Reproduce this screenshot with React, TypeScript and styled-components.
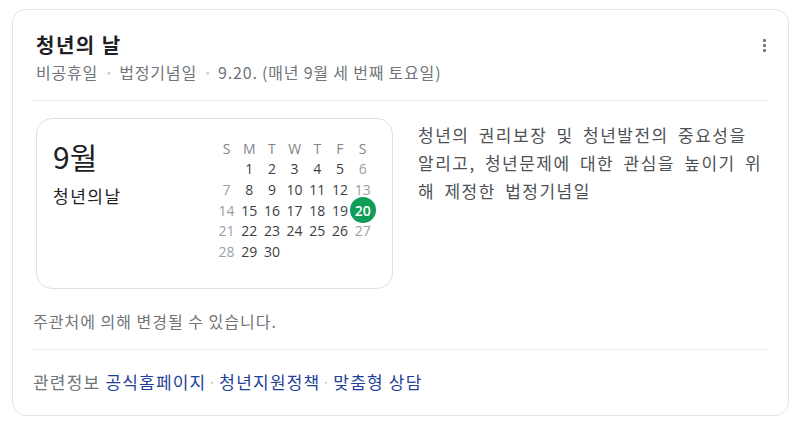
import React from "react";
import styled, { createGlobalStyle } from "styled-components";

const GlobalStyle = createGlobalStyle`
  body {
    margin: 0;
    background: #ffffff;
    font-family: "Noto Sans CJK KR", "Noto Sans", Roboto, sans-serif;
  }
`;

const Card = styled.div`
  box-sizing: border-box;
  width: 777px;
  height: 407px;
  margin: 9px 0 0 12px;
  padding: 22px 20px 0 20px;
  border: 1px solid #e6e6e6;
  border-radius: 14px;
  background: #ffffff;
`;

const Header = styled.div`
  display: flex;
  justify-content: space-between;
  align-items: flex-start;
  padding-left: 3px;
`;

const Title = styled.div`
  font-size: 20px;
  line-height: 26px;
  font-weight: 700;
  letter-spacing: 1.5px;
  color: #202124;
`;

const Subtitle = styled.div`
  margin-top: 3px;
  display: flex;
  align-items: center;
  font-size: 16px;
  line-height: 22px;
  letter-spacing: 0.8px;
  color: #70757a;
`;

const Dot = styled.span`
  margin: 0 8px 0 9px;
  color: #c4c7ca;
  font-size: 10px;
`;

const MoreButton = styled.div`
  display: flex;
  flex-direction: column;
  gap: 2px;
  margin: 7px 2px 0 0;
  & > span {
    width: 3px;
    height: 3px;
    background: #70757a;
    border-radius: 1px;
  }
`;

const Divider = styled.div<{ $top: number; $bottom: number }>`
  height: 1px;
  background: #ebebeb;
  margin: ${(p) => `${p.$top}px 0 ${p.$bottom}px`};
`;

const Body = styled.div`
  display: flex;
  gap: 25px;
  padding-left: 3px;
`;

const CalendarCard = styled.div`
  box-sizing: border-box;
  width: 357px;
  height: 171px;
  border: 1px solid #dfe1e5;
  border-radius: 16px;
  display: flex;
  justify-content: space-between;
  padding: 19px 18px 0 16px;
`;

const MonthInfo = styled.div`
  display: flex;
  flex-direction: column;
`;

const Month = styled.div`
  font-size: 30px;
  line-height: 36px;
  color: #202124;
`;

const EventName = styled.div`
  margin-top: 10px;
  font-size: 17px;
  line-height: 24px;
  letter-spacing: 1.5px;
  color: #202124;
`;

const Grid = styled.div`
  display: grid;
  grid-template-columns: repeat(7, 22.7px);
  grid-auto-rows: 20.6px;
  font-family: "Open Sans", "Noto Sans", sans-serif;
  font-size: 14px;
`;

type Tone = "head" | "weekend" | "day" | "today";

const toneColor: Record<Tone, string> = {
  head: "#80868b",
  weekend: "#9aa0a6",
  day: "#3c4043",
  today: "#ffffff",
};

const Cell = styled.div<{ $tone: Tone }>`
  display: flex;
  align-items: center;
  justify-content: center;
  color: ${(p) => toneColor[p.$tone]};
  position: relative;
  z-index: 0;
  ${(p) =>
    p.$tone === "today" &&
    `
    font-weight: 600;
    &::before {
      content: "";
      position: absolute;
      z-index: -1;
      width: 26px;
      height: 26px;
      border-radius: 50%;
      background: #0f9d58;
      left: 50%;
      top: 50%;
      transform: translate(-50%, -50%);
    }
  `}
`;

const Description = styled.div`
  margin-top: 3px;
  width: 350px;
  font-size: 17px;
  line-height: 28px;
  letter-spacing: 1.5px;
  word-spacing: 4px;
  color: #4d5156;
  word-break: break-all;
`;

const Note = styled.div`
  margin-top: 22px;
  font-size: 16px;
  line-height: 20px;
  letter-spacing: 1px;
  color: #70757a;
`;

const Related = styled.div`
  display: flex;
  align-items: center;
  font-size: 17px;
  line-height: 22px;
  letter-spacing: 1.2px;
  color: #70757a;
`;

const Link = styled.a`
  color: #1f3f9a;
  text-decoration: none;
  cursor: pointer;
`;

const LinkDot = styled.span`
  margin: 0 3px 0 2px;
  color: #9aa0a6;
  font-size: 12px;
`;

const heads = ["S", "M", "T", "W", "T", "F", "S"];
const links = ["공식홈페이지", "청년지원정책", "맞춤형 상담"];

const App: React.FC = () => {
  const days: (number | null)[] = [null];
  for (let d = 1; d <= 30; d++) days.push(d);

  return (
    <>
      <GlobalStyle />
      <Card>
        <Header>
          <div>
            <Title>청년의 날</Title>
            <Subtitle>
              비공휴일
              <Dot>•</Dot>
              법정기념일
              <Dot>•</Dot>
              9.20. (매년 9월 세 번째 토요일)
            </Subtitle>
          </div>
          <MoreButton>
            <span />
            <span />
            <span />
          </MoreButton>
        </Header>
        <Divider $top={17} $bottom={17} />
        <Body>
          <CalendarCard>
            <MonthInfo>
              <Month>9월</Month>
              <EventName>청년의날</EventName>
            </MonthInfo>
            <Grid>
              {heads.map((h, i) => (
                <Cell key={"h" + i} $tone="head">
                  {h}
                </Cell>
              ))}
              {days.map((d, i) => {
                const col = i % 7;
                const tone: Tone = d === 20 ? "today" : col === 0 || col === 6 ? "weekend" : "day";
                return (
                  <Cell key={"d" + i} $tone={tone}>
                    {d ?? ""}
                  </Cell>
                );
              })}
            </Grid>
          </CalendarCard>
          <Description>
            청년의 권리보장 및 청년발전의 중요성을 알리고, 청년문제에 대한 관심을 높이기 위해 제정한 법정기념일
          </Description>
        </Body>
        <Note>주관처에 의해 변경될 수 있습니다.</Note>
        <Divider $top={18} $bottom={21} />
        <Related>
          관련정보&nbsp;
          {links.map((l, i) => (
            <React.Fragment key={l}>
              {i > 0 && <LinkDot>·</LinkDot>}
              <Link>{l}</Link>
            </React.Fragment>
          ))}
        </Related>
      </Card>
    </>
  );
};

export default App;
